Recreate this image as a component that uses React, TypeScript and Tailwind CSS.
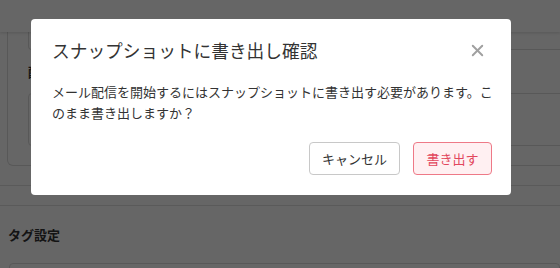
import { X } from 'lucide-react';

const font = { fontFamily: '"Noto Sans CJK JP", "Noto Sans", sans-serif' };

const App = () => {
    return (
        <div className="relative w-[560px] h-[268px] overflow-hidden bg-[#f6f6f6] text-[#333]" style={font}>
            {/* Page behind the modal */}
            <div className="h-[32px] bg-white shadow-[0_1px_3px_rgba(0,0,0,0.15)] relative z-10"></div>
            <div className="bg-white border-b border-[#e2e2e2]">
                <div className="pl-[7px] pb-[19px]">
                    <div className="w-[600px] border border-t-0 border-[#dcdcdc] rounded-b-[6px] pl-[20px] pb-[19px]">
                        <div className="h-[18px] border border-t-0 border-[#dcdcdc] rounded-b-[4px]"></div>
                        <div className="h-[43px] flex items-center text-[13px] font-bold">配信設定</div>
                        <div className="h-[53px] border border-[#dcdcdc] rounded-[4px]"></div>
                    </div>
                </div>
            </div>
            <div className="h-[20px] bg-white border-b border-[#e2e2e2]"></div>
            <div className="bg-white pl-[8px] pt-[19px]">
                <div className="h-[20px] flex items-center text-[13px] font-bold">タグ設定</div>
                <div className="mt-[18px] ml-[1px] h-[30px] border border-[#dcdcdc] rounded-[4px]"></div>
            </div>

            {/* Overlay */}
            <div className="absolute inset-0 z-20 bg-black/60"></div>

            {/* Dialog */}
            <div className="absolute z-30 left-[31px] top-[19px] w-[480px] bg-white rounded-[4px] pt-[18px] pb-[20px]">
                <div className="flex items-center justify-between pl-[21px] pr-[24px]">
                    <h2 className="text-[17.7px] leading-[27px] text-[#333]">スナップショットに書き出し確認</h2>
                    <X size={19} strokeWidth={2.4} className="text-[#a0a0a0]" />
                </div>
                <p className="mt-[17px] pl-[21px] pr-[10px] text-[13px] leading-[21px] text-[#333]">
                    メール配信を開始するにはスナップショットに書き出す必要があります。このまま書き出しますか？
                </p>
                <div className="mt-[19px] flex justify-end gap-[13px] pr-[19px]">
                    <button className="w-[91px] h-[33px] border border-[#c8c8c8] rounded-[4px] bg-white text-[13px] text-[#333]">
                        キャンセル
                    </button>
                    <button className="w-[79px] h-[33px] border border-[#ee7987] rounded-[4px] bg-[#fff0f2] text-[13px] text-[#e2475d]">
                        書き出す
                    </button>
                </div>
            </div>
        </div>
    );
};

export default App;
